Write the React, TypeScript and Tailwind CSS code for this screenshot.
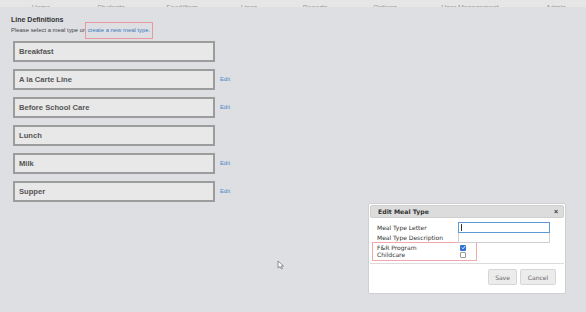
import React from "react";

const navItems = [
  { label: "Home", w: "w-[70px]" },
  { label: "Students", w: "w-[70px]" },
  { label: "Food/Item", w: "w-[72px]" },
  { label: "Lines", w: "w-[62px]" },
  { label: "Reports", w: "w-[70px]" },
  { label: "Options", w: "w-[70px]" },
  { label: "User Management", w: "w-[100px]" },
  { label: "Admin", w: "w-[72px]" },
];

const lines = [
  { name: "Breakfast", edit: false },
  { name: "A la Carte Line", edit: true },
  { name: "Before School Care", edit: true },
  { name: "Lunch", edit: false },
  { name: "Milk", edit: true },
  { name: "Supper", edit: true },
];

export default function App() {
  return (
    <div
      className="relative h-[312px] w-[586px] overflow-hidden bg-[#dedfe3] text-[#333]"
      style={{ fontFamily: "'Liberation Sans', Arial, sans-serif" }}
    >
      {/* top nav, cut off */}
      <div className="flex h-[7px] items-end overflow-hidden bg-[#e6e6e6] pl-[6px]">
        {navItems.map((n) => (
          <div key={n.label} className={`${n.w} flex-none text-center text-[7px] leading-[9px] text-[#999] -mb-[5px]`}>
            {n.label}
          </div>
        ))}
      </div>

      <div className="px-[11px]">
        <div className="mt-[8px] text-[7px] font-bold leading-[9px] text-[#333]">Line Definitions</div>
        <div className="mt-[2px] flex h-[9px] items-center text-[5.9px] text-[#444]">
          <span>Please select a meal type or&nbsp;</span>
          <span className="-ml-[2px] flex-none border border-[#e89aa0] px-[2px] py-[3px] text-[#3b7bbf]">
            create a new meal type.
          </span>
        </div>

        <div className="mt-[6px] flex flex-col gap-[7px] pl-[2px]">
          {lines.map((l) => (
            <div key={l.name} className="flex items-center gap-[5px]">
              <div className="flex h-[21px] w-[202px] flex-none items-center border-2 border-[#9c9c9c] bg-[#e8e8e8] pl-[4px] text-[7.6px] font-bold text-[#555]">
                {l.name}
              </div>
              {l.edit && <span className="text-[5.8px] text-[#4a86c5]">Edit</span>}
            </div>
          ))}
        </div>
      </div>

      {/* mouse pointer */}
      <svg className="absolute left-[277px] top-[260px]" width="8" height="10" viewBox="0 0 8 10">
        <path d="M1 1 L1 8 L3 6.5 L4.5 9 L5.5 8.5 L4.2 6 L6.5 6 Z" fill="#fff" stroke="#777" strokeWidth="0.8" />
      </svg>

      {/* Edit Meal Type dialog */}
      <div className="absolute left-[368px] top-[203px] h-[91px] w-[198px] rounded-[2px] border border-[#d0d0d0] bg-white p-[1px]">
        <div className="flex h-[13px] items-center justify-between rounded-[2px] border border-[#cfcfcf] bg-[#dcdcdc] pl-[7px] pr-[5px]">
          <span className="font-bold text-[#333]" style={{ fontFamily: "'DejaVu Sans', Verdana, sans-serif", fontSize: "6.2px" }}>
            Edit Meal Type
          </span>
          <span className="text-[7px] font-bold leading-none text-[#333]">×</span>
        </div>

        <div className="mt-[4px] pl-[7px] leading-none text-[#333]" style={{ fontFamily: "'DejaVu Sans', Verdana, sans-serif", fontSize: "6px" }}>
          <div className="grid grid-cols-[81px_92px] items-center">
            <span>Meal Type Letter</span>
            <div className="flex h-[11px] items-center border border-[#5b9bd5] pl-[2px]">
              <div className="h-[7px] w-px bg-[#333]" />
            </div>
            <span>Meal Type Description</span>
            <div className="h-[10px] border border-t-0 border-[#cfcfcf]" />
          </div>
          <div className="-ml-[5px] -mt-[1px] w-[105px] border border-[#f0a8ac] py-[1px] pl-[4px]">
            <div className="grid grid-cols-[83px_8px] items-center">
              <span className="leading-[7px]">F&amp;R Program</span>
              <div className="flex h-[6px] w-[6px] items-center justify-center rounded-[1px] bg-[#2f6fd6]">
                <svg width="5" height="5" viewBox="0 0 5 5">
                  <path d="M0.8 2.6 L2 3.8 L4.2 1" stroke="#fff" strokeWidth="0.9" fill="none" />
                </svg>
              </div>
              <span className="leading-[8px]">Childcare</span>
              <div className="h-[6px] w-[6px] rounded-[1px] border border-[#999] bg-white" />
            </div>
          </div>
        </div>

        <div className="mt-[2px] border-t border-[#dcdcdc]" />
        <div className="flex justify-end gap-[3px] pr-[8px] pt-[5px] text-[6px] text-[#666]" style={{ fontFamily: "'DejaVu Sans', Verdana, sans-serif" }}>
          <div className="flex h-[16px] w-[29px] items-center justify-center rounded-[2px] border border-[#d6d6d6] bg-[#ececec]">Save</div>
          <div className="flex h-[16px] w-[36px] items-center justify-center rounded-[2px] border border-[#d6d6d6] bg-[#ececec]">Cancel</div>
        </div>
      </div>
    </div>
  );
}
